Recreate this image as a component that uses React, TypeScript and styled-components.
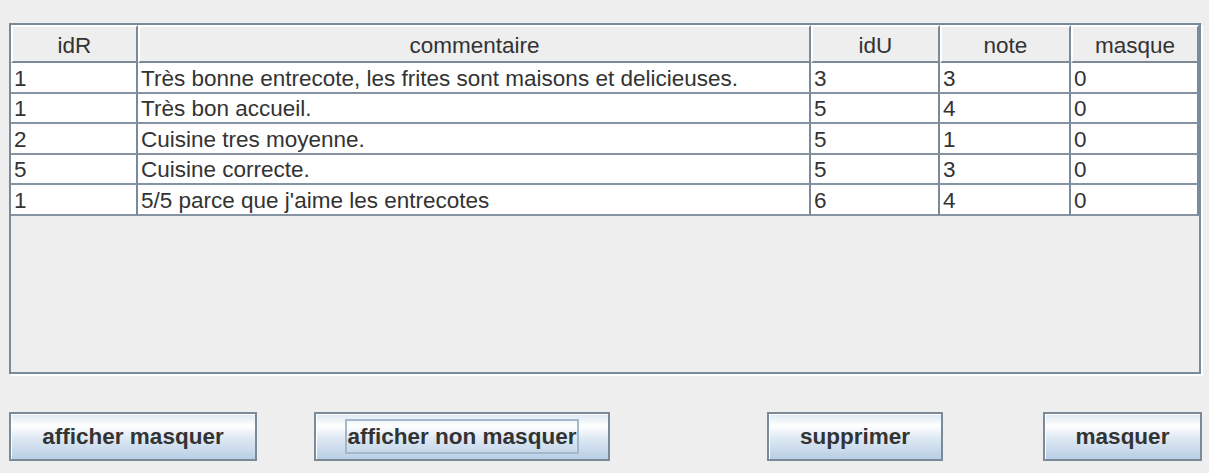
import React from "react";
import styled, { createGlobalStyle } from "styled-components";

const GlobalStyle = createGlobalStyle`
  html, body {
    margin: 0;
    padding: 0;
    background: #eeeeee;
  }
  body {
    font-family: "Liberation Sans", Arial, sans-serif;
    color: #333333;
  }
`;

const COLS = "127px 673px 129px 131px 128px";

const Page = styled.div`
  box-sizing: border-box;
  width: 1209px;
  height: 473px;
  padding: 23px 0 0 9px;
`;

const ScrollPane = styled.div`
  box-sizing: border-box;
  width: 1192px;
  height: 351px;
  border: 2px solid #7a8a99;
  box-shadow: 2px 2px 0 #ffffff;
  background: #eeeeee;
  display: flex;
  flex-direction: column;
  overflow: hidden;
`;

const HeaderRow = styled.div`
  display: grid;
  grid-template-columns: ${COLS};
  height: 38px;
  flex: none;
`;

const HeaderCell = styled.div`
  box-sizing: border-box;
  background: #eeeeee;
  border-top: 2px solid #ffffff;
  border-left: 2px solid #ffffff;
  border-right: 2px solid #7a8a99;
  border-bottom: 2px solid #7a8a99;
  display: flex;
  align-items: flex-end;
  justify-content: center;
  padding-bottom: 2px;
  font-size: 22.5px;
  line-height: 26px;
  white-space: nowrap;
  overflow: hidden;
`;

const Row = styled.div`
  display: grid;
  grid-template-columns: ${COLS};
  height: 30.6px;
  flex: none;
`;

const Cell = styled.div`
  box-sizing: border-box;
  background: #ffffff;
  border-right: 2px solid #7a8a99;
  border-bottom: 2px solid #8593a2;
  display: flex;
  align-items: flex-end;
  padding-left: 3px;
  font-size: 22.5px;
  line-height: 26px;
  white-space: nowrap;
  overflow: hidden;
`;

const ButtonBar = styled.div`
  display: flex;
  margin-top: 38px;
`;

const Button = styled.button<{ $w: number; $offset: number }>`
  box-sizing: border-box;
  width: ${(p) => p.$w}px;
  height: 49px;
  margin: 0 0 0 ${(p) => p.$offset}px;
  padding: 0;
  border: 2px solid #7a8a99;
  box-shadow: inset 1px 1px 0 #ffffff;
  background: linear-gradient(
    to bottom,
    #dde8f3 0%,
    #ffffff 26%,
    #dde8f3 55%,
    #b8cfe5 100%
  );
  font-family: "Liberation Sans", Arial, sans-serif;
  font-weight: bold;
  font-size: 22.5px;
  color: #333333;
  display: flex;
  align-items: center;
  justify-content: center;
  white-space: nowrap;
  cursor: default;
`;

const Label = styled.span<{ $focused: boolean }>`
  display: inline-block;
  border: 2px solid ${(p) => (p.$focused ? "#a3b8cc" : "transparent")};
  padding: 3px 1px;
  line-height: 25px;
`;

const headers = ["idR", "commentaire", "idU", "note", "masque"];

const rows: string[][] = [
  ["1", "Très bonne entrecote, les frites sont maisons et delicieuses.", "3", "3", "0"],
  ["1", "Très bon accueil.", "5", "4", "0"],
  ["2", "Cuisine tres moyenne.", "5", "1", "0"],
  ["5", "Cuisine correcte.", "5", "3", "0"],
  ["1", "5/5 parce que j'aime les entrecotes", "6", "4", "0"],
];

const buttons = [
  { label: "afficher masquer", w: 248, offset: 0, focused: false },
  { label: "afficher non masquer", w: 296, offset: 57, focused: true },
  { label: "supprimer", w: 176, offset: 157, focused: false },
  { label: "masquer", w: 159, offset: 100, focused: false },
];

export default function App() {
  return (
    <Page>
      <GlobalStyle />
      <ScrollPane>
        <HeaderRow>
          {headers.map((h) => (
            <HeaderCell key={h}>{h}</HeaderCell>
          ))}
        </HeaderRow>
        {rows.map((r, i) => (
          <Row key={i}>
            {r.map((c, j) => (
              <Cell key={j}>{c}</Cell>
            ))}
          </Row>
        ))}
      </ScrollPane>
      <ButtonBar>
        {buttons.map((b) => (
          <Button key={b.label} $w={b.w} $offset={b.offset}>
            <Label $focused={b.focused}>{b.label}</Label>
          </Button>
        ))}
      </ButtonBar>
    </Page>
  );
}
